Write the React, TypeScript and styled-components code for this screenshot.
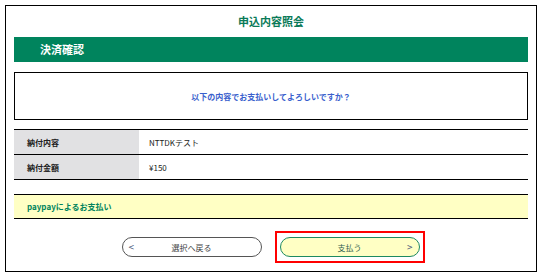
import React from 'react';
import styled, { createGlobalStyle } from 'styled-components';

const GlobalStyle = createGlobalStyle`
  body {
    margin: 0;
    background: #fff;
    font-family: 'Noto Sans CJK JP', 'Noto Sans', sans-serif;
  }
`;

interface IRow {
  label: string;
  value: string;
}

const rows: IRow[] = [
  { label: '納付内容', value: 'NTTDKテスト' },
  { label: '納付金額', value: '¥150' },
];

const App = () => {
  return (
    <>
      <GlobalStyle />
      <Frame>
        <PageTitle>申込内容照会</PageTitle>
        <SectionBar>決済確認</SectionBar>
        <MessageBox>以下の内容でお支払いしてよろしいですか？</MessageBox>
        <InfoTable>
          {rows.map((row) => (
            <Row key={row.label}>
              <Label>{row.label}</Label>
              <Value>{row.value}</Value>
            </Row>
          ))}
        </InfoTable>
        <MethodBox>paypayによるお支払い</MethodBox>
        <ButtonRow>
          <PillButton $variant='back'>
            <Arrow $side='left'>&lt;</Arrow>
            <span>選択へ戻る</span>
          </PillButton>
          <Highlight>
            <PillButton $variant='pay'>
              <span>支払う</span>
              <Arrow $side='right'>&gt;</Arrow>
            </PillButton>
          </Highlight>
        </ButtonRow>
      </Frame>
    </>
  );
};

const Frame = styled.div`
  box-sizing: border-box;
  margin: 5px 0 0 5px;
  width: 532px;
  height: 267px;
  border: 1px solid #000;
  padding: 0 8px;
  display: flex;
  flex-direction: column;
`;

const PageTitle = styled.h1`
  margin: 0;
  height: 31px;
  line-height: 31px;
  text-align: center;
  font-size: 11px;
  font-weight: 700;
  color: #0a7a58;
`;

const SectionBar = styled.h2`
  margin: 0;
  height: 25px;
  line-height: 25px;
  padding-left: 26px;
  background: #00845d;
  color: #fff;
  font-size: 11px;
  font-weight: 700;
`;

const MessageBox = styled.div`
  box-sizing: border-box;
  margin-top: 10px;
  height: 48px;
  border: 1px solid #000;
  display: flex;
  align-items: center;
  justify-content: center;
  color: #3a5fcd;
  font-size: 8px;
  font-weight: 700;
`;

const InfoTable = styled.div`
  margin-top: 9px;
  border-bottom: 1px solid #000;
`;

const Row = styled.div`
  display: flex;
  height: 24px;
  border-top: 1px solid #000;
  font-size: 8px;
`;

const Label = styled.div`
  width: 125px;
  padding-left: 13px;
  box-sizing: border-box;
  background: #e1e1e3;
  display: flex;
  align-items: center;
  font-weight: 700;
  color: #222;
`;

const Value = styled.div`
  flex: 1;
  padding-left: 10px;
  display: flex;
  align-items: center;
  color: #222;
`;

const MethodBox = styled.div`
  box-sizing: border-box;
  margin-top: 14px;
  height: 25px;
  padding-left: 13px;
  border-top: 1px solid #000;
  border-bottom: 1px solid #000;
  background: #ffffc4;
  display: flex;
  align-items: center;
  color: #00845d;
  font-size: 8px;
  font-weight: 700;
`;

const ButtonRow = styled.div`
  margin-top: 12px;
  padding-left: 4px;
  display: flex;
  justify-content: center;
  align-items: center;
  gap: 13px;
`;

const Highlight = styled.div`
  border: 2px solid #f00;
  padding: 4px 3px;
`;

const PillButton = styled.button<{ $variant: 'back' | 'pay' }>`
  position: relative;
  box-sizing: border-box;
  width: 140px;
  height: 20px;
  border-radius: 10px;
  padding: 0;
  display: flex;
  align-items: center;
  justify-content: center;
  font-family: inherit;
  font-size: 8px;
  background: ${({ $variant }) => ($variant === 'pay' ? '#ffffc4' : '#fff')};
  border: 1px solid ${({ $variant }) => ($variant === 'pay' ? '#1e8a60' : '#555')};
  color: ${({ $variant }) => ($variant === 'pay' ? '#2f5f50' : '#444')};
`;

const Arrow = styled.span<{ $side: 'left' | 'right' }>`
  position: absolute;
  top: 50%;
  transform: translateY(-55%);
  ${({ $side }) => ($side === 'left' ? 'left: 6px;' : 'right: 6px;')}
  font-size: 10px;
  color: #4a5a7a;
`;

export default App;
